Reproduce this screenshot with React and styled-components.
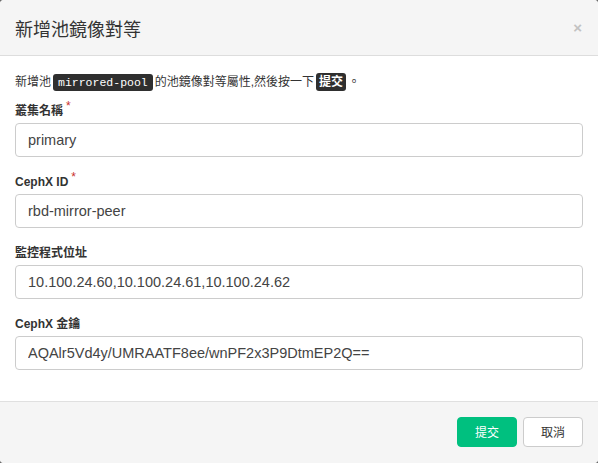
import React from 'react';
import styled, { createGlobalStyle } from 'styled-components';

const GlobalStyle = createGlobalStyle`
  html, body {
    margin: 0;
    padding: 0;
    background: #6b6b6b;
  }
  body {
    font-family: "Liberation Sans", "Noto Sans CJK TC", sans-serif;
    color: #333;
  }
`;

const Modal = styled.div`
  width: 598px;
  height: 463px;
  box-sizing: border-box;
  background: #fff;
  border-radius: 4px;
  overflow: hidden;
  display: flex;
  flex-direction: column;
`;

const Header = styled.div`
  height: 56px;
  box-sizing: border-box;
  background: #f5f5f5;
  border-bottom: 1px solid #ddd;
  display: flex;
  align-items: center;
  justify-content: space-between;
  padding: 0 16px 0 15px;
`;

const Title = styled.h4`
  margin: 0;
  font-size: 18px;
  font-weight: 400;
  color: #333;
  padding-top: 1px;
`;

const Close = styled.span`
  font-size: 15px;
  font-weight: 700;
  color: #c2c2c2;
  line-height: 1;
`;

const Body = styled.div`
  flex: 1;
  padding: 15px 15px 0;
`;

const Intro = styled.p`
  margin: 1px 0 10px;
  font-size: 12px;
  line-height: 20px;
`;

const Code = styled.code`
  font-family: "Liberation Mono", monospace;
  font-size: 11.5px;
  background: #2f2f2f;
  color: #fff;
  border-radius: 3px;
  padding: 2px 5px;
  margin: 0 2px;
`;

const Kbd = styled.kbd`
  font-family: "Liberation Sans", "Noto Sans CJK TC", sans-serif;
  font-size: 12px;
  font-weight: 700;
  background: #2f2f2f;
  color: #fff;
  border-radius: 3px;
  padding: 2px 3px;
  margin: 0 2px;
`;

const Field = styled.div`
  margin-bottom: 17px;
`;

const Label = styled.label`
  display: block;
  font-size: 12px;
  font-weight: 700;
  line-height: 16px;
  margin-bottom: 4px;
`;

const Required = styled.span`
  color: #c9302c;
  font-weight: 400;
  position: relative;
  top: -5px;
  margin-left: 3px;
`;

const Input = styled.input`
  display: block;
  width: 100%;
  height: 34px;
  box-sizing: border-box;
  border: 1px solid #ccc;
  border-radius: 4px;
  padding: 0 12px;
  font-family: "Liberation Sans", sans-serif;
  font-size: 14.5px;
  color: #444;
  background: #fff;
  outline: none;
`;

const Footer = styled.div`
  height: 62px;
  box-sizing: border-box;
  background: #f5f5f5;
  border-top: 1px solid #e0e0e0;
  display: flex;
  align-items: center;
  justify-content: flex-end;
  gap: 6px;
  padding: 0 15px 2px;
`;

const Button = styled.button`
  height: 30px;
  padding: 0 17px;
  border-radius: 4px;
  font-family: "Liberation Sans", "Noto Sans CJK TC", sans-serif;
  font-size: 12px;
  border: 1px solid ${p => (p.$primary ? '#00c07f' : '#ccc')};
  background: ${p => (p.$primary ? '#00c07f' : '#fff')};
  color: ${p => (p.$primary ? '#fff' : '#333')};
`;

const fields = [
  { label: '叢集名稱', required: true, value: 'primary' },
  { label: 'CephX ID', required: true, value: 'rbd-mirror-peer' },
  { label: '監控程式位址', value: '10.100.24.60,10.100.24.61,10.100.24.62' },
  { label: 'CephX 金鑰', value: 'AQAlr5Vd4y/UMRAATF8ee/wnPF2x3P9DtmEP2Q==' },
];

export default function App() {
  return (
    <>
      <GlobalStyle />
      <Modal>
        <Header>
          <Title>新增池鏡像對等</Title>
          <Close>×</Close>
        </Header>
        <Body>
          <Intro>
            新增池<Code>mirrored-pool</Code>的池鏡像對等屬性,然後按一下<Kbd>提交</Kbd>。
          </Intro>
          {fields.map(f => (
            <Field key={f.label}>
              <Label>
                {f.label}
                {f.required && <Required>*</Required>}
              </Label>
              <Input defaultValue={f.value} readOnly />
            </Field>
          ))}
        </Body>
        <Footer>
          <Button $primary>提交</Button>
          <Button>取消</Button>
        </Footer>
      </Modal>
    </>
  );
}
